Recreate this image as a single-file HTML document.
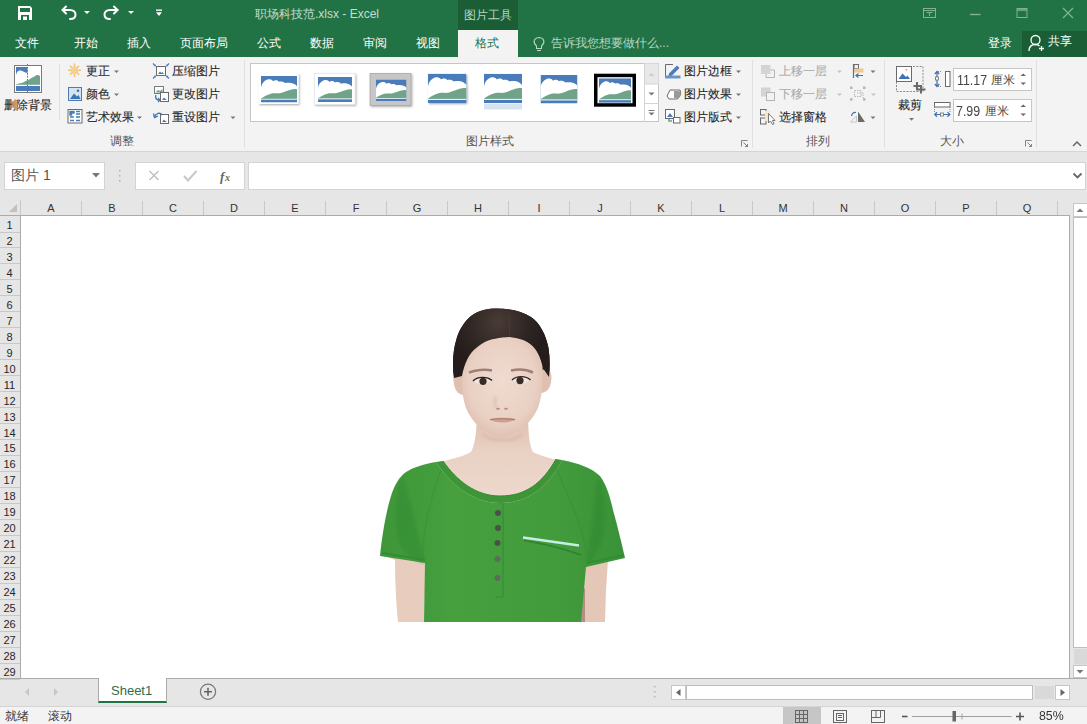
<!DOCTYPE html>
<html><head><meta charset="utf-8">
<style>
*{margin:0;padding:0;box-sizing:border-box}
html,body{width:1087px;height:724px;overflow:hidden;background:#e6e6e6;font-family:"Liberation Sans",sans-serif;color:#444}
.a{position:absolute}
.t{position:absolute;white-space:nowrap;line-height:1}
#title{left:0;top:0;width:1087px;height:57px;background:#217346}
.tab{color:#fff;font-size:12px;top:37px}
#ribbon{left:0;top:57px;width:1087px;height:95px;background:#f3f3f3;border-bottom:1px solid #d5d5d5}
.rl{font-size:12px;color:#262626;-webkit-text-stroke:0.1px currentColor}
.gl{font-size:12px;color:#555;top:135px}
.sep{position:absolute;width:1px;background:#e1e1e1}
.arr{position:absolute;width:0;height:0;border-left:3px solid transparent;border-right:3px solid transparent;border-top:3px solid #777}
.colh{font-size:11px;color:#333;top:203px}
.rowh{font-size:11px;color:#262626;width:19px;text-align:center;left:0}
</style></head><body>
<!-- title bar -->
<div id="title" class="a"></div>
<div class="a" style="left:458px;top:0;width:60px;height:30px;background:#1b5e36"></div>
<div class="a" style="left:458px;top:30px;width:60px;height:27px;background:#f3f3f3"></div>
<div class="a" style="left:1022px;top:31px;width:65px;height:26px;background:#1b5e36"></div>
<div class="t" style="left:255px;top:8px;font-size:12px;color:#c8ddcf">职场科技范.xlsx - Excel</div>
<div class="t" style="left:464px;top:8.5px;font-size:12px;color:#b5d6c0">图片工具</div>
<div class="t tab" style="left:15px">文件</div>
<div class="t tab" style="left:74px">开始</div>
<div class="t tab" style="left:127px">插入</div>
<div class="t tab" style="left:180px">页面布局</div>
<div class="t tab" style="left:257px">公式</div>
<div class="t tab" style="left:310px">数据</div>
<div class="t tab" style="left:363px">审阅</div>
<div class="t tab" style="left:416px">视图</div>
<div class="t tab" style="left:475px;color:#217346">格式</div>
<div class="t" style="left:551px;top:37px;font-size:12px;color:#b9d6c3">告诉我您想要做什么...</div>
<div class="t tab" style="left:988px">登录</div>
<div class="t tab" style="left:1048px;top:35px">共享</div>

<svg class="a" style="left:0;top:0" width="1087" height="57" viewBox="0 0 1087 57">
<g fill="#fff">
<path d="M18 6 H30 L32 8 V20 H18 Z M20 8 V12 H30 V8 Z M21 15 V20 H29 V15 Z M23 16.5 H27 V20 H23 Z" fill-rule="evenodd"/>
</g>
<g fill="none" stroke="#fff" stroke-width="2" stroke-linecap="round">
<path d="M63 10 H70 C74 10 75.5 12.5 75.5 14.5 C75.5 17 73.5 19 70 19"/>
<path d="M66 6.5 L62.5 10 L66 13.5"/>
<path d="M117.5 10 H110 C106 10 104.5 12.5 104.5 14.5 C104.5 17 106.5 19 110 19"/>
<path d="M114 6.5 L117.5 10 L114 13.5"/>
</g>
<g fill="#fff">
<path d="M84 11 H90 L87 14 Z"/><path d="M128 11 H134 L131 14 Z"/>
<rect x="156" y="9.5" width="6" height="1.3"/><path d="M156 12.3 H162 L159 16 Z"/>
</g>
<g fill="none" stroke="#7fb391" stroke-width="1">
<rect x="923.5" y="8.5" width="12" height="9"/><path d="M923.5 10.5 H935.5 M926.5 12.5 H932.5 M929.5 12.5 V16"/>
<path d="M970 14.5 H980.5" stroke-width="1.4"/>
<rect x="1017" y="8.5" width="10" height="9"/><path d="M1017 10 H1027" stroke-width="1.5"/>
<path d="M1063 8 L1073 18 M1073 8 L1063 18" stroke-width="1.3"/>
</g>
<g fill="none" stroke="#fff" stroke-width="1.3">
<circle cx="1035.5" cy="40" r="4.5"/>
<path d="M1029 51 C1029 46 1032 44.5 1035.5 44.5 C1037 44.5 1038.5 45 1039.5 46"/>
<path d="M1039 48.5 H1044 M1041.5 46 V51"/>
</g>
<g fill="none" stroke="#b9d6c3" stroke-width="1.1">
<path d="M536.5 46 C533 43 533 38 539 37.5 C545 38 545 43 541.5 46 V48.5 H536.5 Z"/><path d="M537 50.5 H541"/>
</g>
</svg>
<!-- ribbon -->
<div id="ribbon" class="a"></div>
<div class="t rl" style="left:4px;top:99px">删除背景</div>
<div class="sep" style="left:59px;top:64px;height:56px"></div>
<div class="t rl" style="left:86px;top:65px">更正</div>
<div class="t rl" style="left:86px;top:88px">颜色</div>
<div class="t rl" style="left:86px;top:111px">艺术效果</div>
<div class="t rl" style="left:172px;top:65px">压缩图片</div>
<div class="t rl" style="left:172px;top:88px">更改图片</div>
<div class="t rl" style="left:172px;top:111px">重设图片</div>
<div class="t gl" style="left:110px">调整</div>
<div class="sep" style="left:244px;top:60px;height:88px"></div>
<div class="a" style="left:250px;top:63px;width:409px;height:59px;background:#fff;border:1px solid #c6c6c6"></div>
<div class="t gl" style="left:466px">图片样式</div>
<div class="t rl" style="left:684px;top:65px">图片边框</div>
<div class="t rl" style="left:684px;top:88px">图片效果</div>
<div class="t rl" style="left:684px;top:111px">图片版式</div>
<div class="sep" style="left:752px;top:60px;height:88px"></div>
<div class="t rl" style="left:779px;top:65px;color:#aaa">上移一层</div>
<div class="t rl" style="left:779px;top:88px;color:#aaa">下移一层</div>
<div class="t rl" style="left:779px;top:111px">选择窗格</div>
<div class="t gl" style="left:806px">排列</div>
<div class="sep" style="left:884px;top:60px;height:88px"></div>
<div class="t rl" style="left:898px;top:99px">裁剪</div>
<div class="a" style="left:953px;top:68px;width:79px;height:23px;background:#fff;border:1px solid #c6c6c6"></div>
<div class="a" style="left:953px;top:99px;width:79px;height:23px;background:#fff;border:1px solid #c6c6c6"></div>
<div class="t" style="left:957px;top:72.5px;font-size:14.4px;color:#444;transform:scaleX(0.86);transform-origin:0 0">11.17</div><div class="t" style="left:991px;top:74px;font-size:12px;color:#444">厘米</div>
<div class="t" style="left:956px;top:103.5px;font-size:14.4px;color:#444;transform:scaleX(0.86);transform-origin:0 0">7.99</div><div class="t" style="left:984.5px;top:105px;font-size:12px;color:#444">厘米</div>
<div class="t gl" style="left:940px">大小</div>
<div class="sep" style="left:1036px;top:60px;height:88px"></div>

<svg class="a" style="left:0;top:57px" width="1087" height="95" viewBox="0 57 1087 95">
<defs><symbol id="pic" viewBox="0 0 40 30" preserveAspectRatio="none">
<rect width="40" height="30" fill="#4a7cbb"/>
<path d="M0 13 C0.5 9 3 5.5 7 4 C10 3 12.5 4 13.5 6 C15 4.5 18 4.5 20 6.5 C22 5.8 25 6 27 8 C30 7.2 34 7.5 37 9 C38.5 9.8 40 11 40 12 V26 H0 Z" fill="#fff"/>
<path d="M0 25.5 C3 23.5 7 21 11 20 C15 19 18 20 21 19.5 C25 18.5 29 16.5 33 15.5 C36 14.5 38.5 14.5 40 15 V26 H0 Z" fill="#6fa38a"/>
<rect y="25.8" width="40" height="1" fill="#fff"/>
</symbol>
<filter id="sh" x="-20%" y="-20%" width="140%" height="150%"><feGaussianBlur in="SourceAlpha" stdDeviation="1"/><feOffset dx="0.5" dy="1"/><feComponentTransfer><feFuncA type="linear" slope="0.35"/></feComponentTransfer><feMerge><feMergeNode/><feMergeNode in="SourceGraphic"/></feMerge></filter>
<filter id="soft"><feGaussianBlur stdDeviation="0.55"/></filter>
</defs>
<!-- remove background big icon -->
<rect x="14.5" y="65.5" width="27" height="27" fill="#fff" stroke="#7a7a7a"/>
<rect x="16" y="67" width="11.5" height="9" fill="#4a7cbb"/>
<path d="M16 75 C16.5 72 18.5 70 21 70.5 C23 71 24 72.5 27.5 73 V82 H16 Z" fill="#fff"/>
<path d="M16 84.5 C19 83.5 22 83 24 82 C26 80 28 81 30 79 C32 77 34 77.5 35 76 C37 74.5 38.5 75 40 76 V85 H16 Z" fill="#6fa38a"/>
<rect x="16" y="84.8" width="24" height="1.2" fill="#fff"/>
<rect x="16" y="86" width="24" height="5" fill="#4a7cbb"/>
<path d="M27.5 64 V94" stroke="#6a6a6a" stroke-width="1" stroke-dasharray="1.5 1.5"/>
<!-- sun -->
<g stroke="#f0c37a" stroke-width="1.6"><path d="M74.5 63.5 V77 M68 70.3 H81 M70 65.8 L79 74.8 M79 65.8 L70 74.8"/></g>
<circle cx="74.5" cy="70.3" r="3.8" fill="#f5d08e"/>
<!-- color -->
<rect x="68.5" y="87.5" width="13" height="13" fill="#d5e4f3" stroke="#4c7cb6"/>
<path d="M70 99 L74 93.5 L77 96.5 L78.5 95 L80.5 99 Z" fill="#3f72b2"/>
<circle cx="78" cy="90.8" r="1.3" fill="#3f72b2"/>
<!-- artistic -->
<rect x="68" y="109.5" width="14" height="13.5" fill="#fff" stroke="#6a6a6a"/>
<path d="M70 111.5 H74 V113 H71.5 V115 H70 Z M70 117 H73 M76 111.5 H80 M76 114 H80 M76 117 H80 M70 120.5 H74 M76 120.5 H80" stroke="#4a7cbb" stroke-width="1.4" fill="#4a7cbb"/>
<path d="M71 117 H74 M77 117 H80" stroke="#6fa38a" stroke-width="1.4"/>
<!-- compress -->
<rect x="156.5" y="66.5" width="9" height="9" fill="#fff" stroke="#6a6a6a"/>
<path d="M158 74 L160 71.5 L161.5 73 L162.5 72 L164 74 Z" fill="#4a7cbb"/>
<g stroke="#4a7cbb" stroke-width="1.2"><path d="M153 63.5 L155.5 66 M169 63.5 L166.5 66 M153 78.5 L155.5 76 M169 78.5 L166.5 76"/></g>
<g fill="#4a7cbb"><path d="M155.8 66.3 L153.8 66.3 L155.8 64.3 Z M166.2 66.3 L168.2 66.3 L166.2 64.3 Z M155.8 75.7 L153.8 75.7 L155.8 77.7 Z M166.2 75.7 L168.2 75.7 L166.2 77.7 Z"/></g>
<!-- change picture -->
<rect x="154.5" y="86.5" width="9" height="7" fill="#fff" stroke="#7a7a7a"/>
<path d="M155.5 92.5 L158 90 L160 91 L162.5 89 V92.5 Z" fill="#6fa38a"/>
<rect x="160.5" y="92.5" width="8" height="9" fill="#fff" stroke="#6a6a6a"/>
<path d="M162 100 L164 97.5 L165.5 99 L167 100 Z" fill="#4a7cbb"/>
<path d="M156 95 C155 98 156 100 159 100" stroke="#3f72b2" stroke-width="1.3" fill="none"/><path d="M158 98 L160 100 L158 102" stroke="#3f72b2" stroke-width="1.1" fill="none"/>
<!-- reset picture -->
<rect x="160.5" y="114.5" width="8" height="9" fill="#fff" stroke="#6a6a6a"/>
<path d="M162 122 L164 119.5 L165.5 121 L167 122 Z" fill="#4a7cbb"/>
<path d="M154.5 117 C156 113 160 112 162 115" stroke="#3f72b2" stroke-width="1.5" fill="none"/><path d="M153.5 113.5 L154.5 117.5 L158 116" stroke="#3f72b2" stroke-width="1.3" fill="none"/>
<!-- gallery thumbs -->
<g filter="url(#sh)"><rect x="258.5" y="73.5" width="40" height="30.5" fill="#fff"/></g>
<use href="#pic" x="261" y="76" width="36" height="26.5"/>
<g filter="url(#sh)"><rect x="314.5" y="73.5" width="40.5" height="31" fill="#fff" stroke="#ddd" stroke-width="0.5"/></g>
<use href="#pic" x="318" y="77" width="34" height="25"/>
<g filter="url(#sh)"><rect x="370" y="73.5" width="41" height="32" fill="#c6c6c6" stroke="#9a9a9a" stroke-width="0.6"/></g>
<use href="#pic" x="376" y="79.5" width="30.5" height="21.5"/>
<g filter="url(#sh)"><use href="#pic" x="428" y="73.7" width="38.5" height="29.3"/></g>
<rect x="484" y="103.5" width="38" height="6" fill="#a9c0de" opacity="0.45"/>
<use href="#pic" x="484" y="73.7" width="38" height="29.3"/>
<g filter="url(#soft)"><use href="#pic" x="540.5" y="75" width="37" height="28.5"/></g>
<rect x="594" y="73.7" width="42" height="33" fill="#000"/>
<rect x="597.5" y="77.2" width="35" height="26" fill="#fff"/>
<use href="#pic" x="599" y="78.3" width="32" height="24.5"/>
<!-- gallery scroll -->
<rect x="644" y="63.5" width="14.5" height="20.5" fill="#e8e8e8"/>
<path d="M644.5 63 V122" stroke="#d4d4d4"/>
<path d="M644.5 84 H659 M644.5 103.5 H659" stroke="#d4d4d4"/>
<path d="M649 76 L651.5 73 L654 76 Z" fill="#c9c9c9"/>
<path d="M648.5 92.5 H654.5 L651.5 95.5 Z" fill="#777"/>
<path d="M648.5 110.5 H654.5" stroke="#777" stroke-width="1"/><path d="M648.5 112.5 H654.5 L651.5 115.5 Z" fill="#777"/>
<!-- picture border -->
<path d="M665.5 76 V64.5 H673" stroke="#6a6a6a" fill="none"/>
<path d="M669 73.5 L677 65.5 L679.5 68 L671.5 76 L668.5 76.5 Z" fill="#4a7cbb"/>
<rect x="665" y="75.5" width="15.5" height="3" fill="#6b93c8"/>
<!-- picture effects -->
<path d="M667 96 L670 90 H680 C681 92 681 95 679 97.5 L677 99 H669 Z" fill="#fff" stroke="#6a6a6a"/>
<path d="M674 91 H679.5 C681 93 680.5 96 678.5 98 H674 Z" fill="#9a9a9a"/>
<!-- picture layout -->
<rect x="665.5" y="109.5" width="9" height="9" fill="#fff" stroke="#6a6a6a"/>
<path d="M667 117 L670 113 L673 117 Z" fill="#4a7cbb"/>
<path d="M669 119 V121 H672" stroke="#6fa38a" stroke-width="1.5" fill="none"/>
<rect x="673.5" y="117.5" width="6.5" height="5.5" fill="#fff" stroke="#6a6a6a"/>
<!-- bring forward / send backward (disabled) -->
<rect x="761" y="65" width="9.5" height="9" fill="#d4d4d4"/>
<path d="M770.5 70 H774.5 V77.5 H766 V74" stroke="#b5b5b5" fill="none"/>
<rect x="761" y="87.5" width="9.5" height="9" fill="#d4d4d4"/>
<rect x="766.5" y="92.5" width="8" height="8" fill="#f3f3f3" stroke="#b5b5b5"/>
<!-- selection pane -->
<rect x="760.5" y="109.5" width="5.5" height="5.5" fill="none" stroke="#6a6a6a"/>
<rect x="760.5" y="118" width="5.5" height="6" fill="none" stroke="#6a6a6a"/>
<rect x="765" y="111" width="5" height="10" fill="#f5e6c8"/>
<path d="M768.5 113.5 V123 L770.5 121 L772.5 124.5 L774 124 L772.5 120.5 H775 Z" fill="#fff" stroke="#6a6a6a" stroke-width="0.9"/>
<!-- align -->
<path d="M853.5 64 V78" stroke="#3f72b2" stroke-width="1.2"/>
<rect x="854" y="64.5" width="4.5" height="4" fill="none" stroke="#6a6a6a"/>
<rect x="854" y="68.5" width="9.5" height="4" fill="#f0c890"/>
<path d="M863 75.5 H856 M858.5 73.5 L856 75.5 L858.5 77.5" stroke="#3f72b2" stroke-width="1.2" fill="none"/>
<!-- group (disabled) -->
<g fill="#b5b5b5"><rect x="850" y="86.5" width="2.5" height="2.5"/><rect x="863" y="86.5" width="2.5" height="2.5"/><rect x="850" y="98.2" width="2.5" height="2.5"/><rect x="863" y="98.2" width="2.5" height="2.5"/></g>
<path d="M854.5 90.5 H861 V96.5 H854.5 Z M857 93 H863 V98" stroke="#b5b5b5" fill="none" stroke-dasharray="1.5 1"/>
<!-- rotate -->
<path d="M858 111.5 L865 122 H858 Z" fill="#6a6a6a"/>
<path d="M850.5 122 L856.5 116 V122 Z" fill="none" stroke="#c6c6c6"/>
<path d="M851.5 116 C852 113 854 112 856 112.5" stroke="#3f72b2" stroke-width="1.2" fill="none"/>
<!-- crop -->
<rect x="896.5" y="66.5" width="26.5" height="25" fill="none" stroke="#8a8a8a" stroke-dasharray="2 1.3"/>
<rect x="896.5" y="66.5" width="15" height="15" fill="#fff" stroke="#6a6a6a"/>
<path d="M898.5 79 L902.5 73.5 L906 77 L907.5 75.5 L910 79 Z" fill="#3f72b2"/>
<circle cx="906.5" cy="69.8" r="1" fill="#e8a08a"/>
<path d="M917 82 V89.5 H925.5 M913.5 86 H921 V93.5" stroke="#6a6a6a" stroke-width="2" fill="none"/>
<!-- height -->
<path d="M937 72 V86 M934.8 74 L937 71.5 L939.2 74 M934.8 84 L937 86.5 L939.2 84" stroke="#3f72b2" stroke-width="1.2" fill="none"/>
<rect x="935.5" y="77" width="3" height="3" fill="#fff" stroke="#6a6a6a" stroke-width="0.8"/>
<path d="M938 71.5 H942 M938 86.5 H942" stroke="#8a8a8a" stroke-dasharray="1 1"/>
<rect x="945.5" y="71.5" width="4.5" height="15" fill="#fff" stroke="#6a6a6a"/>
<!-- width -->
<rect x="934.5" y="102.5" width="15.5" height="4.5" fill="#fff" stroke="#6a6a6a"/>
<path d="M934.5 107 V112 M950 107 V112" stroke="#8a8a8a" stroke-dasharray="1 1"/>
<path d="M935 114.5 H949.5 M937 112.3 L934.7 114.5 L937 116.7 M947.5 112.3 L949.8 114.5 L947.5 116.7" stroke="#3f72b2" stroke-width="1.2" fill="none"/>
<rect x="940.5" y="113" width="3" height="3" fill="#fff" stroke="#6a6a6a" stroke-width="0.8"/>
<!-- spinners -->
<g fill="#666"><path d="M1020.5 76 L1023.2 73.5 L1026 76 Z M1020.5 82.5 L1023.2 85 L1026 82.5 Z M1020.5 107 L1023.2 104.5 L1026 107 Z M1020.5 113.5 L1023.2 116 L1026 113.5 Z"/></g>
<!-- dropdown arrows -->
<g fill="#777">
<path d="M114 70.5 H119 L116.5 73 Z M114 93.5 H119 L116.5 96 Z M137 116.5 H142 L139.5 119 Z M230.5 116.5 H235.5 L233 119 Z"/>
<path d="M736 70.5 H741 L738.5 73 Z M736 93.5 H741 L738.5 96 Z M736 116.5 H741 L738.5 119 Z"/>
<path d="M870.5 70.5 H875.5 L873 73 Z M870.5 116.5 H875.5 L873 119 Z M909 118 H914 L911.5 120.7 Z"/>
</g>
<g fill="#c4c4c4"><path d="M837 70.5 H842 L839.5 73 Z M837 93.5 H842 L839.5 96 Z M871 93.5 H876 L873.5 96 Z"/></g>
<!-- dialog launchers -->
<g stroke="#777" fill="none" stroke-width="0.9"><path d="M741.5 146.5 V140.5 H747.5 M743.5 142.5 L747.5 146.5 M745 146.5 H747.5 V144"/>
<path d="M1025.5 146.5 V140.5 H1031.5 M1027.5 142.5 L1031.5 146.5 M1029 146.5 H1031.5 V144"/></g>
<path d="M1073 146 L1077 142 L1081 146" stroke="#666" stroke-width="1.5" fill="none"/>
</svg>
<!-- formula bar -->
<div class="a" style="left:4px;top:162px;width:101px;height:28px;background:#fff;border:1px solid #d4d4d4"></div>
<div class="t" style="left:11px;top:168px;font-size:14px;color:#555">图片 1</div>
<div class="a" style="left:135px;top:162px;width:110px;height:28px;background:#fff;border:1px solid #d4d4d4"></div>
<div class="a" style="left:248px;top:162px;width:838px;height:28px;background:#fff;border:1px solid #d4d4d4"></div>

<svg class="a" style="left:0;top:150px" width="1087" height="70" viewBox="0 150 1087 70">
<path d="M92 173 H100 L96 177.5 Z" fill="#777"/>
<g fill="#b0b0b0"><rect x="119" y="170" width="1.5" height="1.5"/><rect x="119" y="175" width="1.5" height="1.5"/><rect x="119" y="180" width="1.5" height="1.5"/></g>
<path d="M149.5 171 L158.5 180 M158.5 171 L149.5 180" stroke="#bdbdbd" stroke-width="1.3"/>
<path d="M184 176 L188 180.5 L196.5 171" stroke="#c8c8c8" stroke-width="2" fill="none"/>
<text x="220" y="180.5" font-family="Liberation Serif" font-style="italic" font-weight="bold" font-size="13" fill="#666">f</text>
<text x="225" y="181" font-family="Liberation Serif" font-style="italic" font-weight="bold" font-size="10" fill="#666">x</text>
<path d="M1073.5 173.5 L1077.5 177.5 L1081.5 173.5" stroke="#666" stroke-width="1.8" fill="none"/>
<path d="M17 204 V212 H9 Z" fill="#c0c0c0"/>
</svg>
<!-- vertical scrollbar -->
<div class="a" style="left:1073px;top:203px;width:14px;height:14px;background:#fff;border:1px solid #c6c6c6;border-right:none"></div>
<div class="a" style="left:1073px;top:217px;width:14px;height:431px;background:#fff;border-left:1px solid #bdbdbd;border-top:1px solid #bdbdbd;border-bottom:1px solid #bdbdbd"></div>
<div class="a" style="left:1073px;top:665px;width:14px;height:13px;background:#fff;border:1px solid #c6c6c6;border-right:none"></div>
<svg class="a" style="left:0;top:195px" width="1087" height="500" viewBox="0 195 1087 500">
<path d="M1076.5 212 L1080 208.5 L1083.5 212 Z" fill="#777"/>
<path d="M1076.5 670 H1083.5 L1080 673.5 Z" fill="#777"/>
<rect x="1074" y="649" width="13" height="15.5" fill="#d9d9d9"/>
</svg>
<!-- headers -->
<div class="a" style="left:0;top:215px;width:1070px;height:1px;background:#ababab"></div>
<div class="a" style="left:20px;top:215px;width:1px;height:463px;background:#ababab"></div>
<div class="a" style="left:21px;top:216px;width:1048px;height:462px;background:#fff"></div>
<div class="a" style="left:1069px;top:215px;width:1px;height:463px;background:#ababab"></div>
<div class="a" style="left:0;top:678px;width:1087px;height:1px;background:#ababab"></div>
<div class="a" style="left:20px;top:200px;width:1px;height:15px;background:#c8c8c8"></div><div id="hdr"><div class="t colh" style="left:20.5px;width:61px;text-align:center">A</div><div class="a" style="left:81px;top:201px;width:1px;height:14px;background:#c8c8c8"></div><div class="t colh" style="left:81.5px;width:61px;text-align:center">B</div><div class="a" style="left:142px;top:201px;width:1px;height:14px;background:#c8c8c8"></div><div class="t colh" style="left:142.5px;width:61px;text-align:center">C</div><div class="a" style="left:203px;top:201px;width:1px;height:14px;background:#c8c8c8"></div><div class="t colh" style="left:203.5px;width:61px;text-align:center">D</div><div class="a" style="left:264px;top:201px;width:1px;height:14px;background:#c8c8c8"></div><div class="t colh" style="left:264.5px;width:61px;text-align:center">E</div><div class="a" style="left:325px;top:201px;width:1px;height:14px;background:#c8c8c8"></div><div class="t colh" style="left:325.5px;width:61px;text-align:center">F</div><div class="a" style="left:386px;top:201px;width:1px;height:14px;background:#c8c8c8"></div><div class="t colh" style="left:386.5px;width:61px;text-align:center">G</div><div class="a" style="left:447px;top:201px;width:1px;height:14px;background:#c8c8c8"></div><div class="t colh" style="left:447.5px;width:61px;text-align:center">H</div><div class="a" style="left:508px;top:201px;width:1px;height:14px;background:#c8c8c8"></div><div class="t colh" style="left:508.5px;width:61px;text-align:center">I</div><div class="a" style="left:569px;top:201px;width:1px;height:14px;background:#c8c8c8"></div><div class="t colh" style="left:569.5px;width:61px;text-align:center">J</div><div class="a" style="left:630px;top:201px;width:1px;height:14px;background:#c8c8c8"></div><div class="t colh" style="left:630.5px;width:61px;text-align:center">K</div><div class="a" style="left:691px;top:201px;width:1px;height:14px;background:#c8c8c8"></div><div class="t colh" style="left:691.5px;width:61px;text-align:center">L</div><div class="a" style="left:752px;top:201px;width:1px;height:14px;background:#c8c8c8"></div><div class="t colh" style="left:752.5px;width:61px;text-align:center">M</div><div class="a" style="left:813px;top:201px;width:1px;height:14px;background:#c8c8c8"></div><div class="t colh" style="left:813.5px;width:61px;text-align:center">N</div><div class="a" style="left:874px;top:201px;width:1px;height:14px;background:#c8c8c8"></div><div class="t colh" style="left:874.5px;width:61px;text-align:center">O</div><div class="a" style="left:935px;top:201px;width:1px;height:14px;background:#c8c8c8"></div><div class="t colh" style="left:935.5px;width:61px;text-align:center">P</div><div class="a" style="left:996px;top:201px;width:1px;height:14px;background:#c8c8c8"></div><div class="t colh" style="left:996.5px;width:61px;text-align:center">Q</div><div class="a" style="left:1057px;top:201px;width:1px;height:14px;background:#c8c8c8"></div><div class="t rowh" style="top:219.8px">1</div><div class="a" style="left:0;top:231.5px;width:20px;height:1px;background:#c8c8c8"></div><div class="t rowh" style="top:235.8px">2</div><div class="a" style="left:0;top:247.4px;width:20px;height:1px;background:#c8c8c8"></div><div class="t rowh" style="top:251.8px">3</div><div class="a" style="left:0;top:263.4px;width:20px;height:1px;background:#c8c8c8"></div><div class="t rowh" style="top:267.7px">4</div><div class="a" style="left:0;top:279.4px;width:20px;height:1px;background:#c8c8c8"></div><div class="t rowh" style="top:283.7px">5</div><div class="a" style="left:0;top:295.4px;width:20px;height:1px;background:#c8c8c8"></div><div class="t rowh" style="top:299.7px">6</div><div class="a" style="left:0;top:311.4px;width:20px;height:1px;background:#c8c8c8"></div><div class="t rowh" style="top:315.7px">7</div><div class="a" style="left:0;top:327.3px;width:20px;height:1px;background:#c8c8c8"></div><div class="t rowh" style="top:331.6px">8</div><div class="a" style="left:0;top:343.3px;width:20px;height:1px;background:#c8c8c8"></div><div class="t rowh" style="top:347.6px">9</div><div class="a" style="left:0;top:359.3px;width:20px;height:1px;background:#c8c8c8"></div><div class="t rowh" style="top:363.6px">10</div><div class="a" style="left:0;top:375.2px;width:20px;height:1px;background:#c8c8c8"></div><div class="t rowh" style="top:379.6px">11</div><div class="a" style="left:0;top:391.2px;width:20px;height:1px;background:#c8c8c8"></div><div class="t rowh" style="top:395.5px">12</div><div class="a" style="left:0;top:407.2px;width:20px;height:1px;background:#c8c8c8"></div><div class="t rowh" style="top:411.5px">13</div><div class="a" style="left:0;top:423.2px;width:20px;height:1px;background:#c8c8c8"></div><div class="t rowh" style="top:427.5px">14</div><div class="a" style="left:0;top:439.1px;width:20px;height:1px;background:#c8c8c8"></div><div class="t rowh" style="top:443.4px">15</div><div class="a" style="left:0;top:455.1px;width:20px;height:1px;background:#c8c8c8"></div><div class="t rowh" style="top:459.4px">16</div><div class="a" style="left:0;top:471.1px;width:20px;height:1px;background:#c8c8c8"></div><div class="t rowh" style="top:475.4px">17</div><div class="a" style="left:0;top:487.1px;width:20px;height:1px;background:#c8c8c8"></div><div class="t rowh" style="top:491.4px">18</div><div class="a" style="left:0;top:503.1px;width:20px;height:1px;background:#c8c8c8"></div><div class="t rowh" style="top:507.4px">19</div><div class="a" style="left:0;top:519.0px;width:20px;height:1px;background:#c8c8c8"></div><div class="t rowh" style="top:523.3px">20</div><div class="a" style="left:0;top:535.0px;width:20px;height:1px;background:#c8c8c8"></div><div class="t rowh" style="top:539.3px">21</div><div class="a" style="left:0;top:551.0px;width:20px;height:1px;background:#c8c8c8"></div><div class="t rowh" style="top:555.3px">22</div><div class="a" style="left:0;top:566.9px;width:20px;height:1px;background:#c8c8c8"></div><div class="t rowh" style="top:571.2px">23</div><div class="a" style="left:0;top:582.9px;width:20px;height:1px;background:#c8c8c8"></div><div class="t rowh" style="top:587.2px">24</div><div class="a" style="left:0;top:598.9px;width:20px;height:1px;background:#c8c8c8"></div><div class="t rowh" style="top:603.2px">25</div><div class="a" style="left:0;top:614.9px;width:20px;height:1px;background:#c8c8c8"></div><div class="t rowh" style="top:619.2px">26</div><div class="a" style="left:0;top:630.9px;width:20px;height:1px;background:#c8c8c8"></div><div class="t rowh" style="top:635.1px">27</div><div class="a" style="left:0;top:646.8px;width:20px;height:1px;background:#c8c8c8"></div><div class="t rowh" style="top:651.1px">28</div><div class="a" style="left:0;top:662.8px;width:20px;height:1px;background:#c8c8c8"></div><div class="t rowh" style="top:667.1px">29</div><div class="a" style="left:0;top:678.8px;width:20px;height:1px;background:#c8c8c8"></div></div>

<svg class="a" style="left:0;top:0" width="1087" height="724" viewBox="0 0 1087 724">
<defs>
<radialGradient id="skin" cx="0.5" cy="0.45" r="0.6"><stop offset="0" stop-color="#f0dbd0"/><stop offset="0.7" stop-color="#e9d0c3"/><stop offset="1" stop-color="#dcbcad"/></radialGradient>
<linearGradient id="shirt" x1="0" y1="0" x2="1" y2="0"><stop offset="0" stop-color="#3e9638"/><stop offset="0.3" stop-color="#46a03e"/><stop offset="0.7" stop-color="#439c3c"/><stop offset="1" stop-color="#3a9238"/></linearGradient>
<linearGradient id="neck" x1="0" y1="0" x2="0" y2="1"><stop offset="0" stop-color="#dcbcad"/><stop offset="0.45" stop-color="#e9d1c4"/><stop offset="1" stop-color="#eed9cd"/></linearGradient>
<radialGradient id="hairg" gradientUnits="userSpaceOnUse" cx="498" cy="322" r="48"><stop offset="0" stop-color="#4a3b36"/><stop offset="0.6" stop-color="#302724"/><stop offset="1" stop-color="#241d1b"/></radialGradient>
<filter id="bl" filterUnits="userSpaceOnUse" x="360" y="290" width="280" height="340"><feGaussianBlur stdDeviation="0.6"/></filter>
<filter id="bl2" filterUnits="userSpaceOnUse" x="360" y="290" width="280" height="340"><feGaussianBlur stdDeviation="1.5"/></filter>
</defs>
<!-- arms -->
<path d="M382 555 L426 562 L424 622 L398 622 C396 602 395 582 395 560 Z" fill="#e8ccbd"/>
<path d="M582 565 L608 560 L606 590 L605 622 L580 622 Z" fill="#e5c7b8"/>
<path d="M581 590 L585 588 L585 622 L581 622 Z" fill="#7a5a4c" opacity="0.5"/>
<!-- neck/chest -->
<path d="M477 410 L528 410 C528 430 529 445 533 452 C541 456 552 459 562 461 C548 488 528 503 500 503 C472 503 452 486 436 463 C448 460 462 457 471 452 C475 445 477 430 477 410 Z" fill="url(#neck)"/>
<!-- hair back -->
<path d="M454 378 C452 365 453 350 456.5 339 C459 330 464 322 471 316 C479 310 488 308.5 497 308.5 C510 308.5 522 311 531 317 C540 323 546 335 548.5 348 C550 358 550 368 549 377 C540 384 462 384 454 378 Z" fill="url(#hairg)"/>
<!-- ears -->
<path d="M462 372 C455 369 452 375 454 384 C455 391 459 395 464 395 Z" fill="#dfbfb0"/>
<path d="M542 370 C549 367 553 373 551 382 C550 389 546 393 541 393 Z" fill="#dfbfb0"/>
<!-- face -->
<path d="M462 366 C461 384 462.5 398 466 408 C470 418 477 426 485 431 C491 435 496 437 502 437 C508 437 513 435 519 431 C527 425 534 417 538 408 C541.5 398 543.5 384 542.5 366 C538 345 525 336 503 336 C481 336 466 345 462 366 Z" fill="url(#skin)"/>
<!-- hair front -->
<path d="M454 378 C452 365 453 350 456.5 339 C459 330 464 322 471 316 C479 310 488 308.5 497 308.5 C510 308.5 522 311 531 317 C540 323 546 335 548.5 348 C550 358 550 368 549 377 L543.5 369 C541 358 538 350 532 345 C526 340 518 338 509.5 337 C500 337.5 490 339 484 342.5 C476 347 470 353 467 360 C465 364 463 370 462 376 Z" fill="url(#hairg)"/>
<path d="M509 314 L509.5 336" stroke="#54443e" stroke-width="1" opacity="0.6"/>
<!-- brows & eyes -->
<path d="M469 372.5 C475 370 485 369 492 370.5" stroke="#a08076" stroke-width="2.6" fill="none" filter="url(#bl)"/>
<path d="M511 370.5 C518 369 527 369.5 533 372.5" stroke="#a08076" stroke-width="2.6" fill="none" filter="url(#bl)"/>
<path d="M474 381.5 C478 377 487 376.5 491.5 381 C487 385 478 385.5 474 381.5 Z" fill="#efe4df"/>
<path d="M512.5 380.5 C516.5 376 525.5 376 529.5 380.5 C525 384.5 516.5 384.5 512.5 380.5 Z" fill="#efe4df"/>
<circle cx="483" cy="381.3" r="3.6" fill="#3a2b27"/>
<circle cx="520" cy="380.6" r="3.6" fill="#3a2b27"/>
<path d="M473 381 C477 376.5 487 376 492 380.5" stroke="#2e2220" stroke-width="1.4" fill="none"/>
<path d="M512 380 C516.5 375.5 526 375.5 530.5 380" stroke="#2e2220" stroke-width="1.4" fill="none"/>
<path d="M495.5 396 C495 401 494.5 405 496 408" stroke="#dcbcae" stroke-width="2" fill="none" filter="url(#bl2)"/>
<ellipse cx="498" cy="408.8" rx="2" ry="1" fill="#b98d80" filter="url(#bl)"/>
<ellipse cx="506" cy="408.8" rx="2" ry="1" fill="#b98d80" filter="url(#bl)"/>
<path d="M489 419.5 C496 417 509 417 516 419.5 C509 423.5 496 423.5 489 419.5 Z" fill="#cf9f92" filter="url(#bl)"/>
<path d="M490 419.5 C497 418.5 508 418.5 515 419.5" stroke="#a87266" stroke-width="0.9" fill="none"/>
<path d="M482 434 C492 442 513 442 523 434" stroke="#dcbcad" stroke-width="3" fill="none" filter="url(#bl2)"/>
<!-- shirt -->
<path d="M436 462 C452 486 474 503 500 503 C527 503 547 489 562 460 C578 463 592 468 600 476 C606 484 610 496 613 510 C618 528 622 545 625 558 L586 567 L581 622 L424 622 L425 563 L380 556 C382 536 386 512 391 496 C394 486 399 477 406 472 C414 467 424 464 436 462 Z" fill="url(#shirt)"/>
<path d="M436 462 C452 486 474 503 500 503 C527 503 547 489 562 460 L556 459 C542 484 525 496 500 496 C476 496 457 481 443 461 Z" fill="#3d9538"/>
<path d="M443 461 C457 481 476 496 500 496 C525 496 542 484 556 459" stroke="#378c34" stroke-width="1" fill="none"/>
<path d="M400 478 C395 500 394 520 398 540 C402 552 412 560 425 563 C420 540 412 510 405 484 Z" fill="#368f34" opacity="0.7" filter="url(#bl2)"/>
<path d="M600 478 C606 500 606 520 603 540 C598 552 592 560 586 566 C590 540 594 510 596 484 Z" fill="#338c33" opacity="0.7" filter="url(#bl2)"/>
<path d="M441 470 C430 500 422 530 423 560" stroke="#3a8f36" stroke-width="1.2" fill="none" opacity="0.6"/>
<path d="M556 468 C570 500 585 530 588 563" stroke="#3a8f36" stroke-width="1.2" fill="none" opacity="0.6"/>
<path d="M382 553 L425 560" stroke="#338a33" stroke-width="2" opacity="0.8"/>
<path d="M624 555 L587 563" stroke="#338a33" stroke-width="2" opacity="0.8"/>
<path d="M523 537.5 L579 545.5" stroke="#c6eee4" stroke-width="2.4"/>
<path d="M524 540.5 C545 544 565 549 581 555" stroke="#2c7a30" stroke-width="1.6" fill="none" opacity="0.8"/>
<path d="M503 503 L503 597" stroke="#2f8632" stroke-width="1" opacity="0.8"/>
<path d="M496 597 H503" stroke="#2f8632" stroke-width="1" opacity="0.8"/>
<g fill="#4a514a"><circle cx="498" cy="513" r="3"/><circle cx="498" cy="528" r="3"/><circle cx="497.5" cy="543" r="3"/></g>
<g fill="#5f6a5f"><circle cx="497.5" cy="559" r="3"/><circle cx="497.5" cy="578" r="3"/></g>
</svg>
<!-- sheet tabs -->
<div class="a" style="left:98px;top:678px;width:69px;height:25px;background:#fff;border:1px solid #ababab;border-top:none;border-bottom:2px solid #217346"></div>
<div class="t" style="left:111px;top:684px;font-size:13px;color:#2f6b4a">Sheet1</div>
<!-- status bar -->
<div class="a" style="left:0;top:706px;width:1087px;height:18px;background:#f3f3f3;border-top:1px solid #d4d4d4"></div>
<div class="t" style="left:5px;top:710px;font-size:12px;color:#333">就绪</div>
<div class="t" style="left:48px;top:710px;font-size:12px;color:#333">滚动</div>
<div class="a" style="left:783px;top:707px;width:38px;height:17px;background:#c6c6c6"></div>
<div class="t" style="left:1039px;top:709px;font-size:13px;color:#333;transform:scaleX(0.95);transform-origin:0 0">85%</div>
<svg class="a" style="left:0;top:678px" width="1087" height="46" viewBox="0 678 1087 46">
<path d="M29 688 V696 L25 692 Z" fill="#c6c6c6"/>
<path d="M54 688 V696 L58 692 Z" fill="#c6c6c6"/>
<circle cx="208" cy="691.8" r="7.6" fill="none" stroke="#777" stroke-width="1.2"/>
<path d="M204 691.8 H212 M208 687.8 V695.8" stroke="#666" stroke-width="1.6"/>
<g fill="#b5b5b5"><rect x="654" y="686" width="1.5" height="1.5"/><rect x="654" y="691" width="1.5" height="1.5"/><rect x="654" y="696" width="1.5" height="1.5"/></g>
<rect x="671.5" y="685.5" width="14" height="14" fill="#fff" stroke="#c6c6c6"/>
<path d="M676 692.5 L680.5 689 V696 Z" fill="#666"/>
<rect x="686.5" y="685.5" width="346" height="14" fill="#fff" stroke="#bdbdbd"/>
<rect x="1055.5" y="685.5" width="14" height="14" fill="#fff" stroke="#c6c6c6"/>
<path d="M1065 692.5 L1060.5 689 V696 Z" fill="#666"/>
<rect x="1035" y="686" width="19" height="13" fill="#d9d9d9"/>
<!-- status icons -->
<g fill="none" stroke="#666" stroke-width="1">
<rect x="795.5" y="710.5" width="12" height="12"/><path d="M799.5 710.5 V722.5 M803.5 710.5 V722.5 M795.5 714.5 H807.5 M795.5 718.5 H807.5"/>
<rect x="833.5" y="710.5" width="13" height="12"/><rect x="836.5" y="713.5" width="7" height="7"/><path d="M838 715.5 H842 M838 517.5 H842 M838 717.5 H842"/>
<rect x="871.5" y="710.5" width="13" height="12"/><path d="M871.5 717.5 H880.5 V710.5 M876 710.5 V717.5"/>
</g>
<path d="M902 716.5 H907.5" stroke="#555" stroke-width="1.6"/>
<path d="M912 716.5 H1011.5" stroke="#a0a0a0" stroke-width="1"/>
<path d="M962 713.5 V719.5" stroke="#a0a0a0" stroke-width="1"/>
<rect x="952.5" y="711" width="3.5" height="10.5" fill="#666"/>
<path d="M1016 716.5 H1024 M1020 712.5 V720.5" stroke="#555" stroke-width="1.6"/>
</svg>
</body></html>
